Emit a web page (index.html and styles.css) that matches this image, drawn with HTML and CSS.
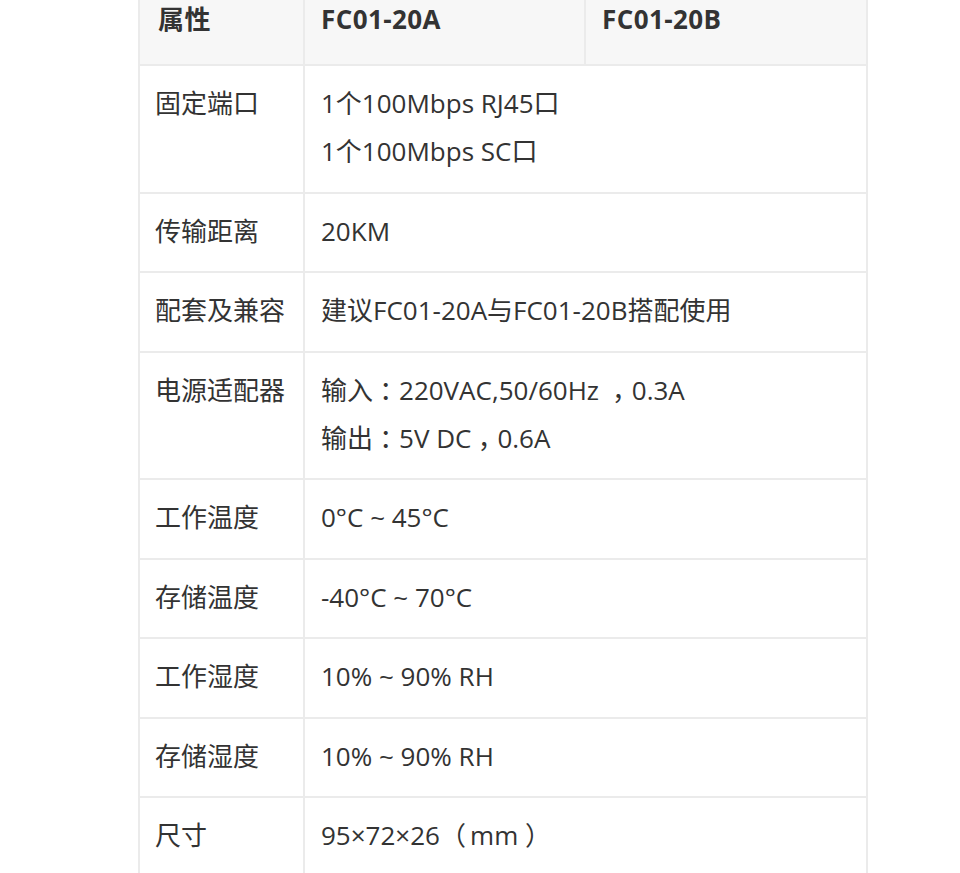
FILE: index.html
```html
<!DOCTYPE html>
<html lang="zh-CN">
<head>
<meta charset="utf-8">
<title>参数</title>
<link rel="stylesheet" href="styles.css">
</head>
<body>
<div class="page">
  <table class="spec">
    <colgroup>
      <col class="c1"><col class="c2"><col class="c3">
    </colgroup>
    <thead>
      <tr><th>属性</th><th>FC01-20A</th><th>FC01-20B</th></tr>
    </thead>
    <tbody>
      <tr><td>固定端口</td><td colspan="2">1个100Mbps RJ45口<br>1个100Mbps SC口</td></tr>
      <tr><td>传输距离</td><td colspan="2">20KM</td></tr>
      <tr><td>配套及兼容</td><td colspan="2">建议FC01-20A与FC01-20B搭配使用</td></tr>
      <tr><td>电源适配器</td><td colspan="2">输入<span class="ctr">：</span>220VAC,50/60Hz <span class="ctr">，</span>0.3A<br>输出<span class="ctr">：</span>5V DC<span class="ctr">，</span>0.6A</td></tr>
      <tr><td>工作温度</td><td colspan="2">0°C ~ 45°C</td></tr>
      <tr><td>存储温度</td><td colspan="2">-40°C ~ 70°C</td></tr>
      <tr><td>工作湿度</td><td colspan="2">10% ~ 90% RH</td></tr>
      <tr><td>存储湿度</td><td colspan="2">10% ~ 90% RH</td></tr>
      <tr><td>尺寸</td><td colspan="2">95×72×26<span class="lp">（</span>mm<span class="rp">）</span></td></tr>
    </tbody>
  </table>
</div>
</body>
</html>
```
FILE: styles.css
```css
html, body {
  margin: 0;
  padding: 0;
  background: #ffffff;
}
body {
  font-family: "Open Sans", "Noto Sans CJK SC", sans-serif;
  color: #333333;
  overflow: hidden;
}
.page {
  padding-left: 138px;
  margin-top: -27px;
}
.spec {
  border-collapse: collapse;
  width: 728px;
  table-layout: fixed;
  font-size: 26px;
  line-height: 48.4px;
}
.c1 { width: 165px; }
.c2 { width: 281px; }
.c3 { width: 282px; }
.spec th,
.spec td {
  border: 2px solid #ebebeb;
  padding: 13px 16px 16px;
  text-align: left;
  vertical-align: top;
  font-weight: 400;
}
.spec td:first-child {
  padding-left: 15px;
}
.spec th {
  background: #f7f7f7;
  font-weight: 700;
  padding-top: 20px;
  padding-bottom: 20.5px;
  letter-spacing: 0.4px;
}
.spec th:first-child {
  padding-left: 18px;
}
.ctr {
  padding-left: 0.24em;
  letter-spacing: -0.24em;
}
.lp {
  padding-right: 0.16em;
}
.rp {
  padding-left: 0.26em;
  letter-spacing: -0.26em;
}
```
